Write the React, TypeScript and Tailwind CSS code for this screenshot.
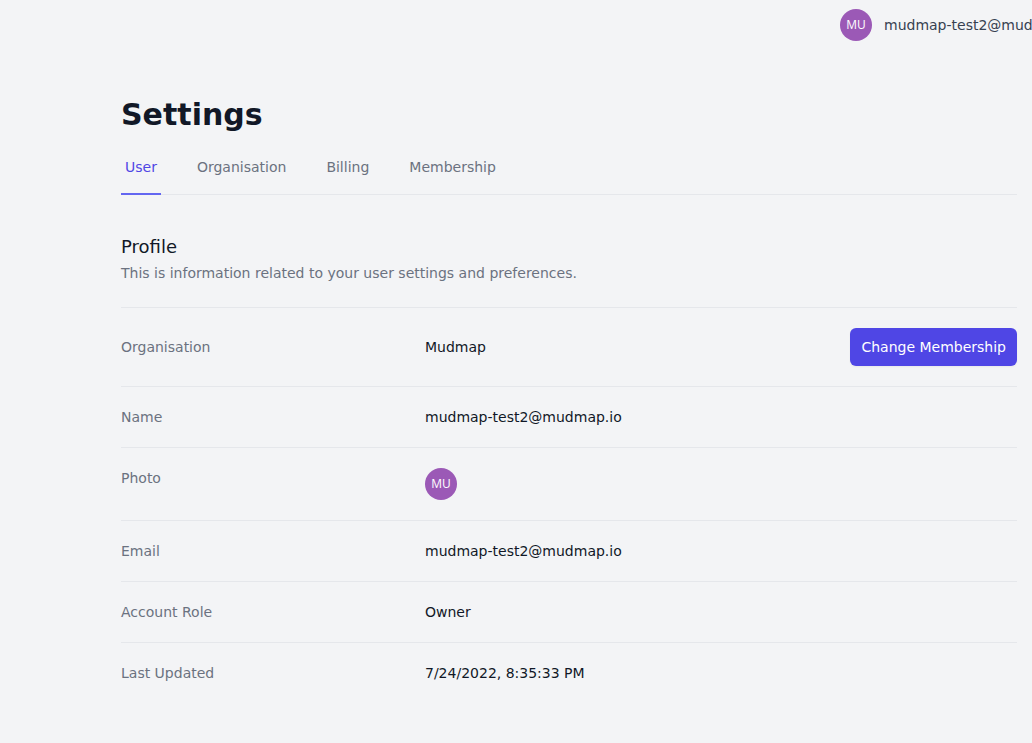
const tabs = ["User", "Organisation", "Billing", "Membership"];

function Avatar() {
  return (
    <svg viewBox="0 0 32 32" className="size-8 shrink-0" role="img" aria-label="MU">
      <circle cx="16" cy="16" r="16" fill="#9b59b6" />
      <text x="16" y="20" textAnchor="middle" fontSize="12" fill="#ffffff" fontFamily="'Open Sans', 'Noto Sans', sans-serif">
        MU
      </text>
    </svg>
  );
}

const rows = [
  { label: "Organisation", value: "Mudmap", action: "Change Membership" },
  { label: "Name", value: "mudmap-test2@mudmap.io" },
  { label: "Photo", value: <Avatar /> },
  { label: "Email", value: "mudmap-test2@mudmap.io" },
  { label: "Account Role", value: "Owner" },
  { label: "Last Updated", value: "7/24/2022, 8:35:33 PM" },
];

export default function App() {
  return (
    <div className="min-h-screen overflow-x-hidden bg-[#f3f4f6] pb-10 font-['DejaVu_Sans',sans-serif] text-[#111827]">
      <header className="flex h-[50px] justify-end overflow-hidden">
        <button type="button" className="flex w-48 items-center gap-3 text-sm whitespace-nowrap text-[#374151]">
          <Avatar />
          <span>mudmap-test2@mudmap.io</span>
        </button>
      </header>
      <main className="mr-[15px] ml-[121px] pt-[47px]">
        <h1 className="text-3xl font-bold">Settings</h1>
        <nav className="mt-6 flex gap-8 border-b border-[#e5e7eb] text-sm text-[#6b7280]">
          {tabs.map((tab, i) => (
            <a
              key={tab}
              href="#"
              className={
                i === 0
                  ? "-mb-px border-b-2 border-[#6366f1] px-1 pb-4 text-[#4f46e5]"
                  : "-mb-px border-b-2 border-transparent px-1 pb-4"
              }
            >
              {tab}
            </a>
          ))}
        </nav>
        <section className="mt-10">
          <h2 className="text-lg leading-6">Profile</h2>
          <p className="mt-1 text-sm text-[#6b7280]">This is information related to your user settings and preferences.</p>
          <dl className="mt-6 divide-y divide-[#e5e7eb] border-t border-[#e5e7eb] text-sm">
            {rows.map((row) => (
              <div key={row.label} className="grid grid-cols-3 gap-4 py-5">
                <dt className={row.action ? "self-center text-[#6b7280]" : "text-[#6b7280]"}>{row.label}</dt>
                <dd className="col-span-2 flex items-center justify-between">
                  {row.value}
                  {row.action && (
                    <button type="button" className="h-[38px] rounded-md bg-[#4f46e5] px-[11px] text-white shadow-xs">
                      {row.action}
                    </button>
                  )}
                </dd>
              </div>
            ))}
          </dl>
        </section>
      </main>
    </div>
  );
}
